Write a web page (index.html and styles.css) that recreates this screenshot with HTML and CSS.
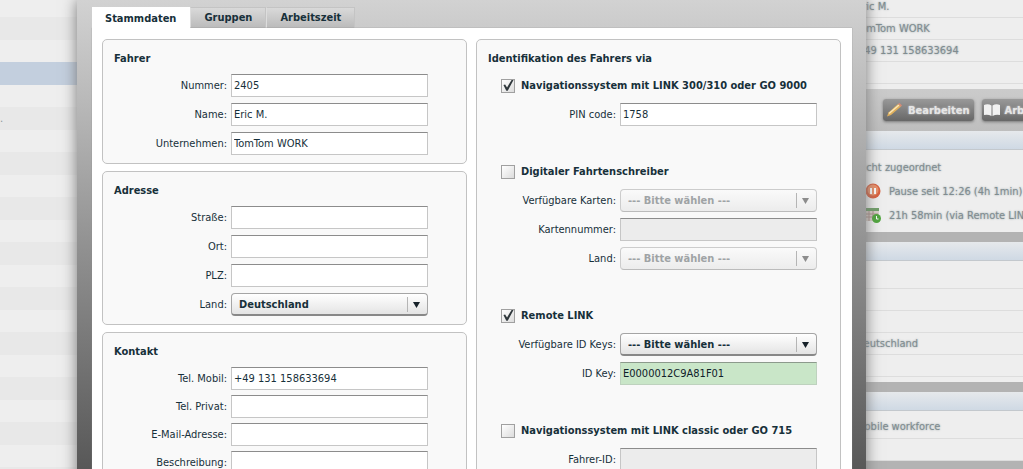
FILE: index.html
```html
<!DOCTYPE html>
<html lang="de">
<head>
<meta charset="utf-8">
<title>Fahrer bearbeiten</title>
<link rel="stylesheet" href="styles.css">
</head>
<body>
<div class="app">
  <ul class="list">
    <li></li><li></li><li></li><li class="selected"></li><li></li><li>.</li><li></li><li></li><li></li><li></li><li></li>
    <li></li><li></li><li></li><li></li><li></li><li></li><li></li><li></li><li></li><li></li><li></li>
  </ul>
  <div class="details">
    <section class="block first">
      <p class="line">Eric M.</p>
      <p class="line">TomTom WORK</p>
      <p class="line">+49 131 158633694</p>
      <p class="line"></p>
    </section>
    <div class="actions">
      <button class="action" type="button">
        <svg width="18" height="16" viewBox="0 0 18 16"><path d="M2 14.500 3.500 10.500 13 2 16 4.500 6 13z" fill="#e0b05c"/><path d="M4 11.500 14 3" stroke="#fbe7b8" stroke-width="1.500"/><path d="M13 2 14.500 1 17 3.500 16 4.500z" fill="#d98b76"/></svg>
        Bearbeiten
      </button>
      <button class="action" type="button">
        <svg width="16" height="12" viewBox="0 0 16 12"><path d="M0 1Q4-.5 7.500 1.500V12Q4 10 0 11zM16 1Q12-.5 8.500 1.500V12Q12 10 16 11z" fill="#f1f1f1"/></svg>
        Arbeitszeit
      </button>
    </div>
    <section class="block status">
      <div class="bar"></div>
      <p class="info plain">Nicht zugeordnet</p>
      <p class="info">
        <svg width="16" height="16" viewBox="0 0 16 16"><circle cx="8" cy="8" r="7.500" fill="#d9603f"/><circle cx="8" cy="7" r="5.500" fill="#ea9069"/><path d="M6 5v6M10 5v6" stroke="#fff" stroke-width="2"/></svg>
        Pause seit 12:26 (4h 1min)
      </p>
      <p class="info">
        <svg width="16" height="16" viewBox="0 0 16 16"><path d="M0 1h14v13H0z" fill="#d9cfc8"/><path d="M0 1h14v3H0z" fill="#6f9f68"/><path d="M0 7h13M0 10h9M4 4v10M8 4v6" stroke="#aa8f88"/><circle cx="11.500" cy="11.500" r="4.500" fill="#4fa63c"/><path d="M11.500 9v3h2" stroke="#fff" fill="none"/></svg>
        21h 58min (via Remote LINK)
      </p>
    </section>
    <section class="block address">
      <div class="bar"></div>
      <p class="line tall"></p>
      <p class="line"></p>
      <p class="line"></p>
      <p class="line">Deutschland</p>
      <p class="line"></p>
    </section>
    <section class="block">
      <div class="bar"></div>
      <p class="line tall">Mobile workforce</p>
      <p class="line"></p>
    </section>
  </div>

  <div class="overlay">
    <main class="dialog">
      <nav class="tabs">
        <button class="tab active" type="button">Stammdaten</button>
        <button class="tab" type="button">Gruppen</button>
        <button class="tab" type="button">Arbeitszeit</button>
      </nav>
      <form class="pane">
        <div class="column">
          <section class="panel">
            <h2 class="title">Fahrer</h2>
            <div class="fields">
              <label for="nummer">Nummer:</label><input class="text" id="nummer" type="text" value="2405">
              <label for="name">Name:</label><input class="text" id="name" type="text" value="Eric M.">
              <label for="unternehmen">Unternehmen:</label><input class="text" id="unternehmen" type="text" value="TomTom WORK">
            </div>
          </section>
          <section class="panel">
            <h2 class="title">Adresse</h2>
            <div class="fields">
              <label for="strasse">Straße:</label><input class="text" id="strasse" type="text">
              <label for="ort">Ort:</label><input class="text" id="ort" type="text">
              <label for="plz">PLZ:</label><input class="text" id="plz" type="text">
              <label for="land">Land:</label><span class="combo"><select id="land"><option>Deutschland</option></select></span>
            </div>
          </section>
          <section class="panel">
            <h2 class="title">Kontakt</h2>
            <div class="fields compact">
              <label for="mobil">Tel. Mobil:</label><input class="text" id="mobil" type="text" value="+49 131 158633694">
              <label for="privat">Tel. Privat:</label><input class="text" id="privat" type="text">
              <label for="email">E-Mail-Adresse:</label><input class="text" id="email" type="text">
              <label for="beschreibung">Beschreibung:</label><textarea class="text area" id="beschreibung"></textarea>
            </div>
          </section>
        </div>
        <section class="panel ident">
          <h2 class="title">Identifikation des Fahrers via</h2>
          <div class="groups">
            <div class="fields">
              <label class="check"><input type="checkbox" checked>Navigationssystem mit LINK 300/310 oder GO 9000</label>
              <label for="pin">PIN code:</label><input class="text" id="pin" type="text" value="1758">
            </div>
            <div class="fields">
              <label class="check"><input type="checkbox">Digitaler Fahrtenschreiber</label>
              <label for="karten">Verfügbare Karten:</label><span class="combo disabled"><select id="karten" disabled><option>--- Bitte wählen ---</option></select></span>
              <label for="kartennummer">Kartennummer:</label><input class="text" id="kartennummer" type="text" disabled>
              <label for="kartenland">Land:</label><span class="combo disabled"><select id="kartenland" disabled><option>--- Bitte wählen ---</option></select></span>
            </div>
            <div class="fields">
              <label class="check"><input type="checkbox" checked>Remote LINK</label>
              <label for="keys">Verfügbare ID Keys:</label><span class="combo"><select id="keys"><option>--- Bitte wählen ---</option></select></span>
              <label for="idkey">ID Key:</label><input class="text valid" id="idkey" type="text" value="E0000012C9A81F01">
            </div>
            <div class="fields">
              <label class="check"><input type="checkbox">Navigationssystem mit LINK classic oder GO 715</label>
              <label for="fahrerid">Fahrer-ID:</label><input class="text" id="fahrerid" type="text" disabled>
            </div>
          </div>
        </section>
      </form>
    </main>
  </div>
</div>
</body>
</html>
```
FILE: styles.css
```css
* { box-sizing: border-box; }

body, ul, p, h2 { margin: 0; padding: 0; }

body, button, input, select, textarea {
  font-family: "DejaVu Sans Condensed", "DejaVu Sans", sans-serif;
  font-size: 11px;
  color: #17303a;
}

.app {
  position: relative;
  display: flex;
  height: 100vh;
  overflow: hidden;
  background: #ededed;
}

/* Driver list behind the dialog */
.list {
  flex: 1;
  margin-top: -5px;
  list-style: none;
}
.list li {
  height: 23px;
  line-height: 23px;
  color: #8a979b;
  background: #eeeeee;
}
.list li:nth-child(odd) { height: 22px; }
.list li:nth-child(even) { background: #e8e8e8; }
.list li.selected { background: #c3cfde; }

/* Details column behind the dialog */
.details {
  width: 183px;
  display: flex;
  flex-direction: column;
  background: #b3b3b3;
  white-space: nowrap;
}
.block {
  flex: none;
  margin-bottom: 10px;
  overflow: hidden;
  background: #eeeeee;
}
.block.first {
  margin: -4px 0 0;
  padding-bottom: 5px;
}
.block.address { padding-bottom: 5px; }
.line {
  height: 22px;
  padding-left: 16px;
  line-height: 22px;
  color: #7f8c90;
  text-shadow: 0 0 2px #8f9b9f;
  border-bottom: 1px solid #dddddd;
}
.line.tall { height: 28px; line-height: 32px; }
.bar {
  height: 19px;
  background: linear-gradient(#e6e9ec, #cfd9e4);
  border-bottom: 1px solid #c3c8cd;
}
.status { height: 101px; }
.info {
  display: flex;
  align-items: center;
  gap: 8px;
  height: 24px;
  padding-left: 25px;
  color: #7f8c90;
  text-shadow: 0 0 2px #8f9b9f;
}
.info.plain { margin-top: 5px; padding-left: 16px; }
.info svg { flex: none; }

.actions {
  flex: none;
  display: flex;
  gap: 8px;
  height: 42px;
  padding: 10px 0 10px 43px;
  background: linear-gradient(#cbcbcb, #bebebe);
}
.action {
  flex: none;
  display: flex;
  align-items: center;
  gap: 5px;
  height: 22px;
  padding: 0 4px 0 2px;
  border: 0;
  border-radius: 3px;
  background: linear-gradient(#999999, #676767);
  box-shadow: 0 1px 3px #777777;
  color: #e6e6e6;
  font-weight: bold;
  text-shadow: 0 0 2px #dddddd;
}

/* Dialog */
.overlay {
  position: absolute;
  inset: 0;
  padding: 0 157px 0 77px;
}
.dialog {
  min-height: 100%;
  padding: 7px 14px 14px 15px;
  background: linear-gradient(#d2d2d2, #b9b9b9 100px, #909090 250px, #555555 480px);
  box-shadow: 0 0 14px #777777;
}
.tabs {
  position: relative;
  z-index: 1;
  display: flex;
  align-items: flex-end;
  height: 21px;
}
.tab {
  height: 21px;
  padding: 0 13px 1px;
  border: 1px solid #c4c4c4;
  border-bottom-color: #b0b0b0;
  border-left-color: #dddddd;
  background: linear-gradient(#d9d9d9, #bcbcbc);
  font-weight: bold;
}
.tab.active {
  padding: 2px 14px 0 13px;
  border: 0;
  background: #ffffff;
}
.pane {
  position: relative;
  display: grid;
  grid-template-columns: 1fr 1fr;
  gap: 9px;
  padding: 11px 11px 11px 10px;
  background: #ffffff;
  box-shadow: 0 0 1px #888888;
}
.column { display: grid; align-content: start; gap: 7px; }
.panel {
  padding: 11px 38px 8px 11px;
  border: 1px solid #c2c2c2;
  border-radius: 5px;
  background: #f9f9f9;
}
.title {
  margin-bottom: 8px;
  font-size: 11px;
  line-height: 15px;
}
.fields {
  display: grid;
  grid-template-columns: 113px minmax(0, 1fr);
  gap: 6px 4px;
  grid-auto-rows: minmax(23px, auto);
}
.fields.compact { row-gap: 5px; }
.fields > label {
  line-height: 23px;
  text-align: right;
}
.ident { padding-right: 23px; }
.groups { display: grid; gap: 34px; padding-left: 13px; }
.groups .fields { grid-template-columns: 115px minmax(0, 1fr); }
.fields > .check {
  grid-column: 1 / -1;
  display: flex;
  align-items: center;
  gap: 6px;
  font-weight: bold;
  white-space: nowrap;
}

.text {
  width: 100%;
  height: 23px;
  padding: 0 2px 1px;
  border: 1px solid #c6c6c6;
  border-top-color: #8c8c8c;
  border-radius: 0;
  background: #ffffff;
  outline: 0;
}
.text:disabled { background: #ececec; }
.text.valid { background: #c9e6c8; border-color: #bed2be; border-top-color: #8c9a8c; color: #10202a; }
.area { height: 60px; resize: none; }

.combo { position: relative; display: block; }
.combo select {
  appearance: none;
  width: 100%;
  height: 23px;
  padding: 0 26px 0 7px;
  border: 1px solid #a5a5a5;
  border-bottom: 2px solid #888888;
  border-radius: 4px;
  background: linear-gradient(#ffffff, #e4e4e4);
  font-weight: bold;
  opacity: 1;
}
.combo::before {
  content: "";
  position: absolute;
  top: 4px;
  bottom: 4px;
  right: 20px;
  border-left: 1px solid #b5b5b5;
}
.combo::after {
  content: "";
  position: absolute;
  top: 9px;
  right: 8px;
  width: 7px;
  height: 6px;
  background: #17222a;
  clip-path: polygon(0 0, 100% 0, 50% 100%);
}
.combo.disabled select {
  border-color: #cccccc;
  border-bottom: 1px solid #bbbbbb;
  background: linear-gradient(#fafafa, #ececec);
  color: #9fa3a5;
}
.combo.disabled::after { background: #8c8c8c; }

.check input {
  appearance: none;
  flex: none;
  width: 14px;
  height: 14px;
  margin: 0;
  border: 1px solid #a0a0a0;
  background: linear-gradient(135deg, #ffffff, #dcdcdc);
}
.check input:checked::before {
  content: "";
  display: block;
  width: 12px;
  height: 12px;
  background: #30383c;
  clip-path: polygon(12% 45%, 26% 42%, 42% 66%, 80% 4%, 96% 4%, 48% 94%, 36% 94%);
}
```
